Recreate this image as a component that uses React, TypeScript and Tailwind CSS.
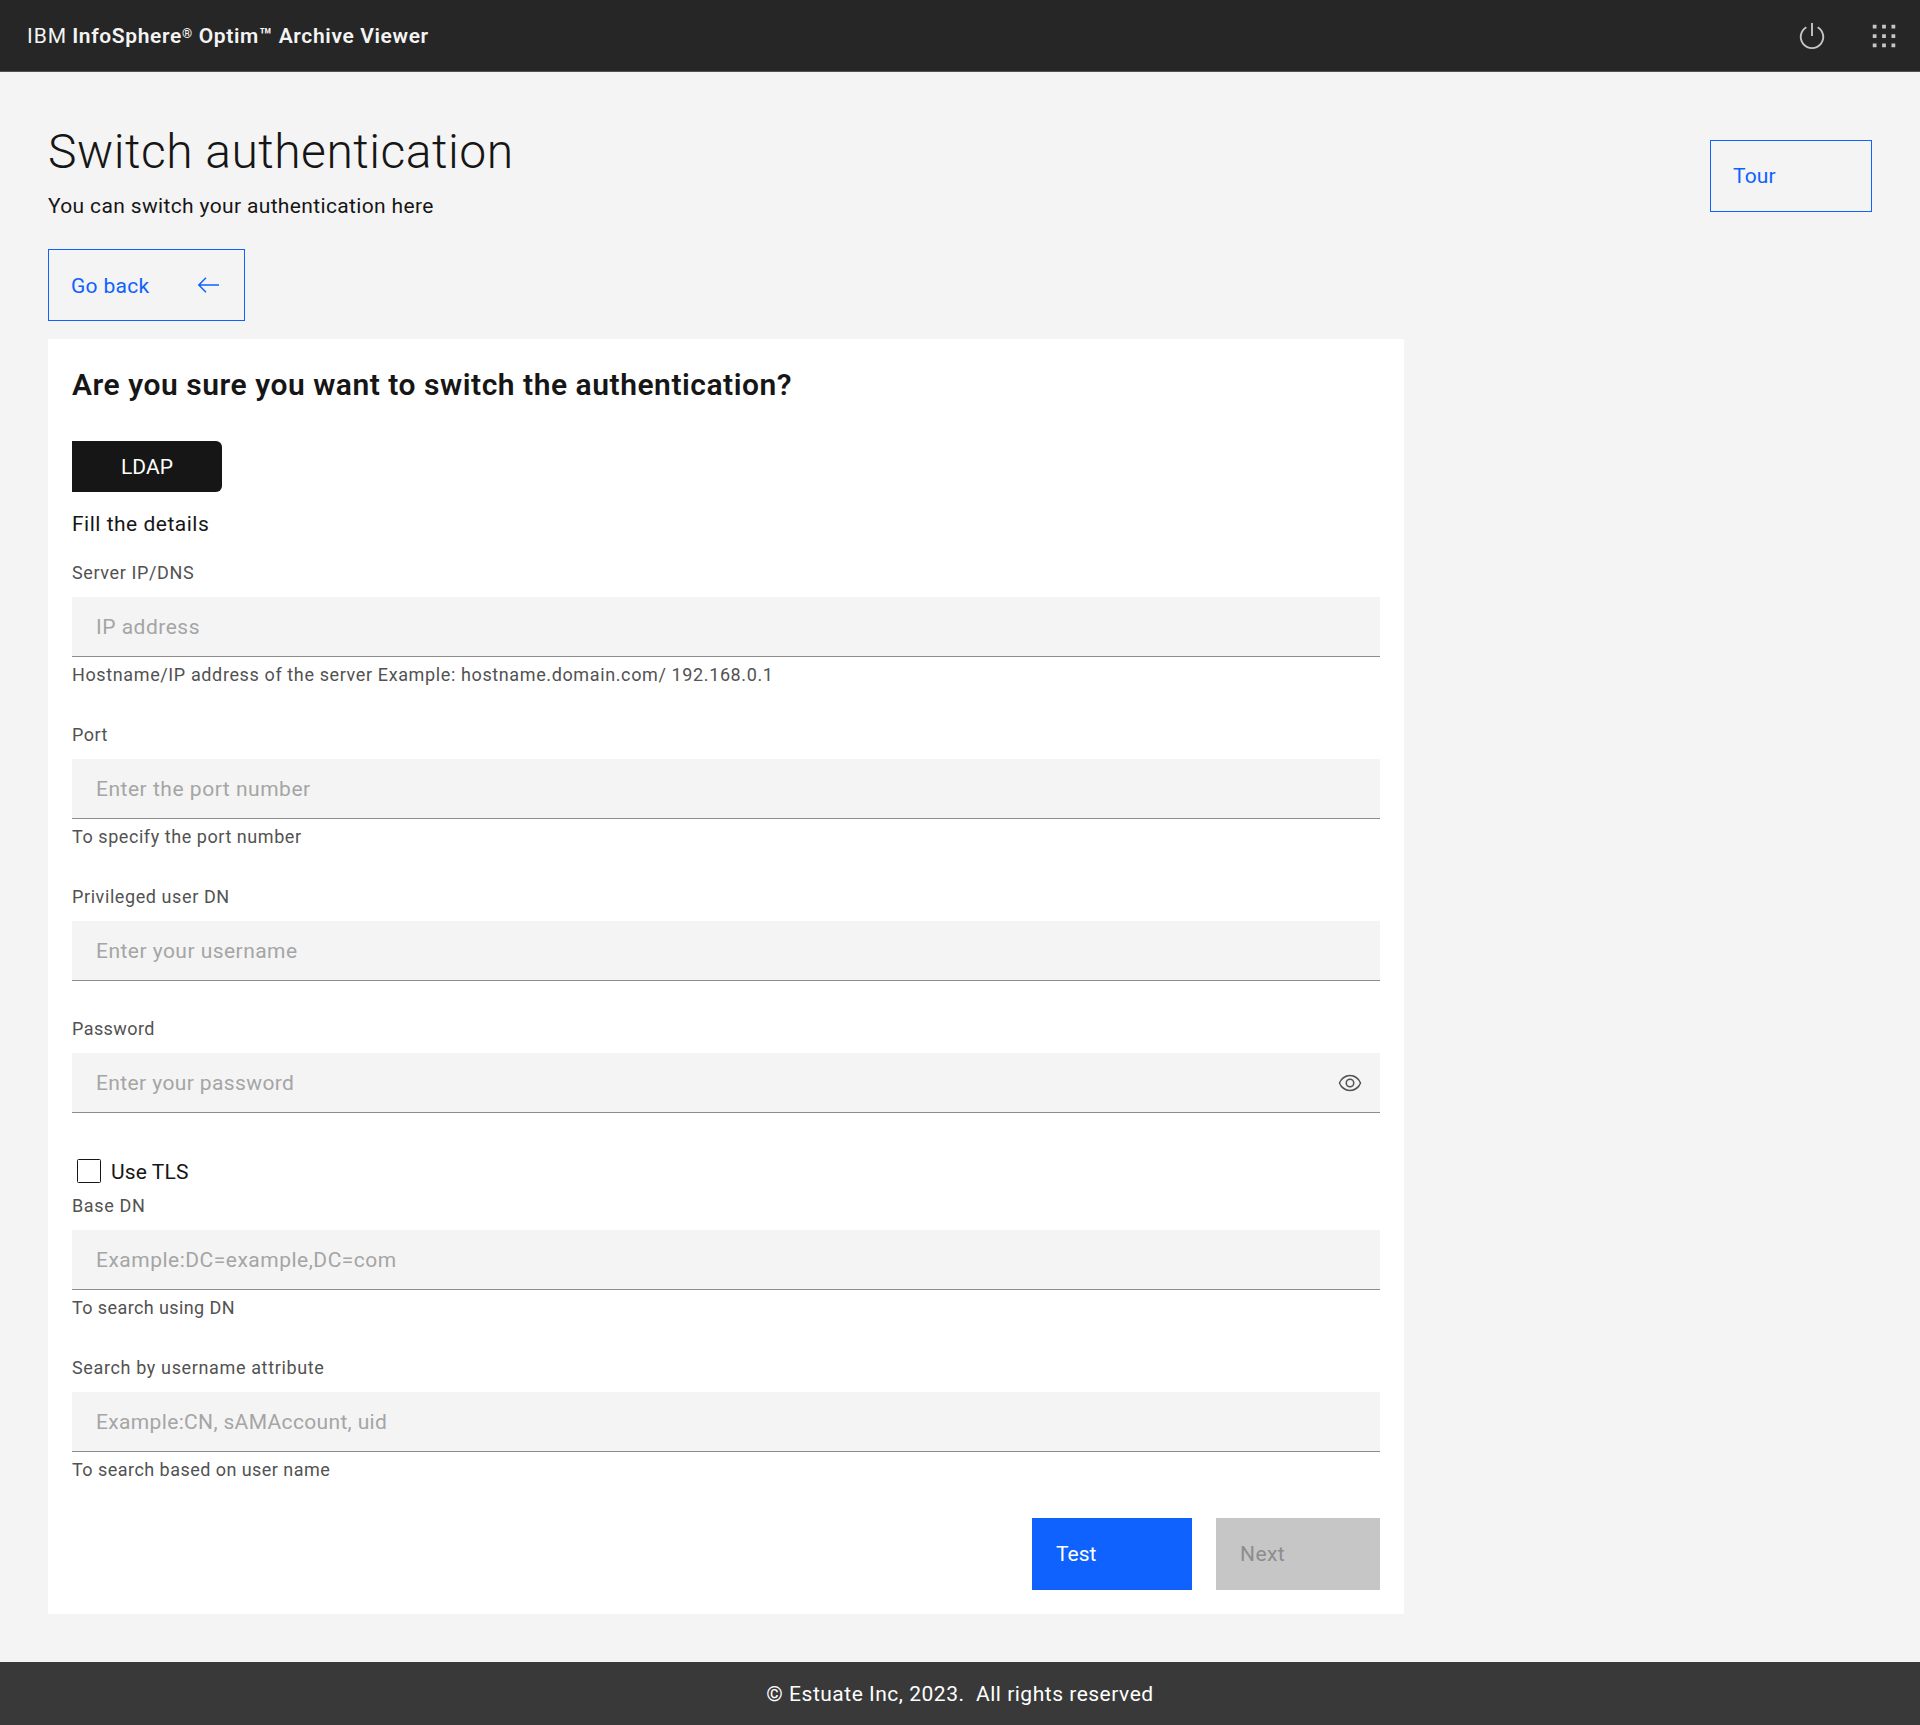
import React, { useState } from 'react';

type FieldProps = {
  label: string;
  labelClass: string;
  placeholder: string;
  inputClass: string;
  helper?: string;
  helperClass?: string;
  type?: string;
  children?: React.ReactNode;
};

function Field({ label, labelClass, placeholder, inputClass, helper, helperClass, type = 'text', children }: FieldProps) {
  return (
    <label className="block">
      <span className={`block text-[18px] leading-6 text-[#525252] ${labelClass}`}>{label}</span>
      <span className="mt-3 flex h-[60px] items-center border-b border-[#8d8d8d] bg-[#f4f4f4] pr-[18px] pl-6">
        <input
          type={type}
          placeholder={placeholder}
          className={`h-[30px] min-w-0 flex-1 bg-transparent text-[21px] leading-[30px] text-[#161616] outline-none placeholder:text-[#a5a5a5] ${inputClass}`}
        />
        {children}
      </span>
      {helper && (
        <span className={`mt-1.5 block text-[18px] leading-6 text-[#525252] ${helperClass}`}>{helper}</span>
      )}
    </label>
  );
}

function Header() {
  return (
    <header className="flex h-[72px] items-center justify-between border-b border-[#525252] bg-[#262626]">
      <div className="flex items-center gap-[5px] pl-[27px] text-[21px] leading-[30px] whitespace-nowrap text-[#f4f4f4]">
        <span className="tracking-[1px]">IBM</span>
        <span className="font-semibold tracking-[0.64px]">
          InfoSphere<span className="inline-block -translate-y-[5px] text-[13px] leading-none">®</span> Optim™ Archive Viewer
        </span>
      </div>
      <div className="flex">
        <button className="flex size-[72px] items-center justify-center" aria-label="Log out">
          <svg viewBox="0 0 32 32" className="size-[30px]" fill="#c6c6c6">
            <path d="M22.5 5.74l-1 1.73a11 11 0 1 1-11 0l-1-1.73a13 13 0 1 0 13 0Z" />
            <path d="M15 2h2v14h-2z" />
          </svg>
        </button>
        <button className="flex size-[72px] items-center justify-center" aria-label="App switcher">
          <svg viewBox="0 0 32 32" className="size-[30px]" fill="#c6c6c6">
            <path d="M4 4h4v4H4zM14 4h4v4h-4zM24 4h4v4h-4zM4 14h4v4H4zM14 14h4v4h-4zM24 14h4v4h-4zM4 24h4v4H4zM14 24h4v4h-4zM24 24h4v4h-4z" />
          </svg>
        </button>
      </div>
    </header>
  );
}

export default function App() {
  const [tls, setTls] = useState(false);
  return (
    <div className="flex h-[1725px] w-full flex-col bg-[#f4f4f4] font-['Roboto',sans-serif] text-[21px] leading-[30px] font-[370] text-[#161616]">
      <Header />
      <main className="flex-1 px-12 pt-[50px]">
        <div className="flex justify-between">
          <div>
            <h1 className="text-[48px] leading-[60px] font-[340] tracking-[0.5px]">Switch authentication</h1>
            <p className="mt-[9px] tracking-[0.35px]">You can switch your authentication here</p>
          </div>
          <button className="mt-[18px] flex h-[72px] w-[162px] items-center border border-[#0f62fe] pl-[22px] tracking-[0.18px] text-[#0f62fe]">
            Tour
          </button>
        </div>
        <button className="mt-7 flex h-[72px] w-[197px] items-center justify-between border border-[#0f62fe] pt-px pr-[23px] pl-[22px] tracking-[0.3px] text-[#0f62fe]">
          Go back
          <svg viewBox="0 0 24 24" className="mb-px size-6" fill="none" stroke="currentColor" strokeWidth="1.5">
            <path d="M1.5 12H22M9 4.8 1.8 12 9 19.2" />
          </svg>
        </button>

        <section className="mt-[18px] w-[1356px] bg-white px-6 pt-7 pb-6">
          <h2 className="text-[30px] leading-9 font-semibold tracking-[0.53px]">
            Are you sure you want to switch the authentication?
          </h2>
          <button className="mt-[38px] flex h-[51px] w-[150px] items-center justify-center rounded-r-[6px] bg-[#161616] tracking-[0.1px] text-white">
            LDAP
          </button>
          <p className="mt-[17px] tracking-[0.5px]">Fill the details</p>
          <div className="mt-[22px] flex flex-col gap-9">
            <Field
              label="Server IP/DNS"
              labelClass="tracking-[0.62px]"
              placeholder="IP address"
              inputClass="tracking-[0.5px]"
              helper="Hostname/IP address of the server Example: hostname.domain.com/ 192.168.0.1"
              helperClass="tracking-[0.62px]"
            />
            <Field
              label="Port"
              labelClass="tracking-[0.5px]"
              placeholder="Enter the port number"
              inputClass="tracking-[0.52px]"
              helper="To specify the port number"
              helperClass="tracking-[0.56px]"
            />
            <Field
              label="Privileged user DN"
              labelClass="tracking-[0.59px]"
              placeholder="Enter your username"
              inputClass="tracking-[0.465px]"
            />
            <Field
              label="Password"
              labelClass="tracking-[0.42px]"
              placeholder="Enter your password"
              inputClass="tracking-[0.39px]"
              type="password"
            >
              <svg viewBox="0 0 32 32" className="size-6" fill="#525252">
                <path d="M30.94 15.66A16.69 16.69 0 0 0 16 5 16.69 16.69 0 0 0 1.06 15.66a1 1 0 0 0 0 .68A16.69 16.69 0 0 0 16 27 16.69 16.69 0 0 0 30.94 16.34a1 1 0 0 0 0-.68ZM16 25c-5.3 0-10.9-3.93-12.93-9C5.1 10.93 10.7 7 16 7s10.9 3.93 12.93 9C26.9 21.07 21.3 25 16 25Z" />
                <path d="M16 10a6 6 0 1 0 6 6 6 6 0 0 0-6-6Zm0 10a4 4 0 1 1 4-4 4 4 0 0 1-4 4Z" />
              </svg>
            </Field>
          </div>
          <label className="mt-11 flex h-[30px] items-center gap-[10px] pl-[5px] tracking-[0.12px]">
            <input
              type="checkbox"
              checked={tls}
              onChange={(e) => setTls(e.target.checked)}
              className="mb-[2px] size-6 appearance-none rounded-[1.5px] border border-[#161616] checked:bg-[#161616]"
            />
            Use TLS
          </label>
          <div className="mt-[7px] flex flex-col gap-9">
            <Field
              label="Base DN"
              labelClass="tracking-[0.66px]"
              placeholder="Example:DC=example,DC=com"
              inputClass="tracking-[0.5px]"
              helper="To search using DN"
              helperClass="tracking-[0.4px]"
            />
            <Field
              label="Search by username attribute"
              labelClass="tracking-[0.635px]"
              placeholder="Example:CN, sAMAccount, uid"
              inputClass="tracking-[0.343px]"
              helper="To search based on user name"
              helperClass="tracking-[0.46px]"
            />
          </div>
          <div className="mt-9 flex justify-end gap-6">
            <button className="flex h-[72px] w-[160px] items-center bg-[#0f62fe] pl-6 text-white">Test</button>
            <button className="flex h-[72px] w-[164px] items-center bg-[#c6c6c6] pl-6 tracking-[0.4px] text-[#8d8d8d]" disabled>
              Next
            </button>
          </div>
        </section>
      </main>
      <footer className="flex h-[63px] justify-center bg-[#393939] pt-[17px] tracking-[0.51px] text-white">
        © Estuate Inc, 2023.{'\u00a0 '}All rights reserved
      </footer>
    </div>
  );
}
